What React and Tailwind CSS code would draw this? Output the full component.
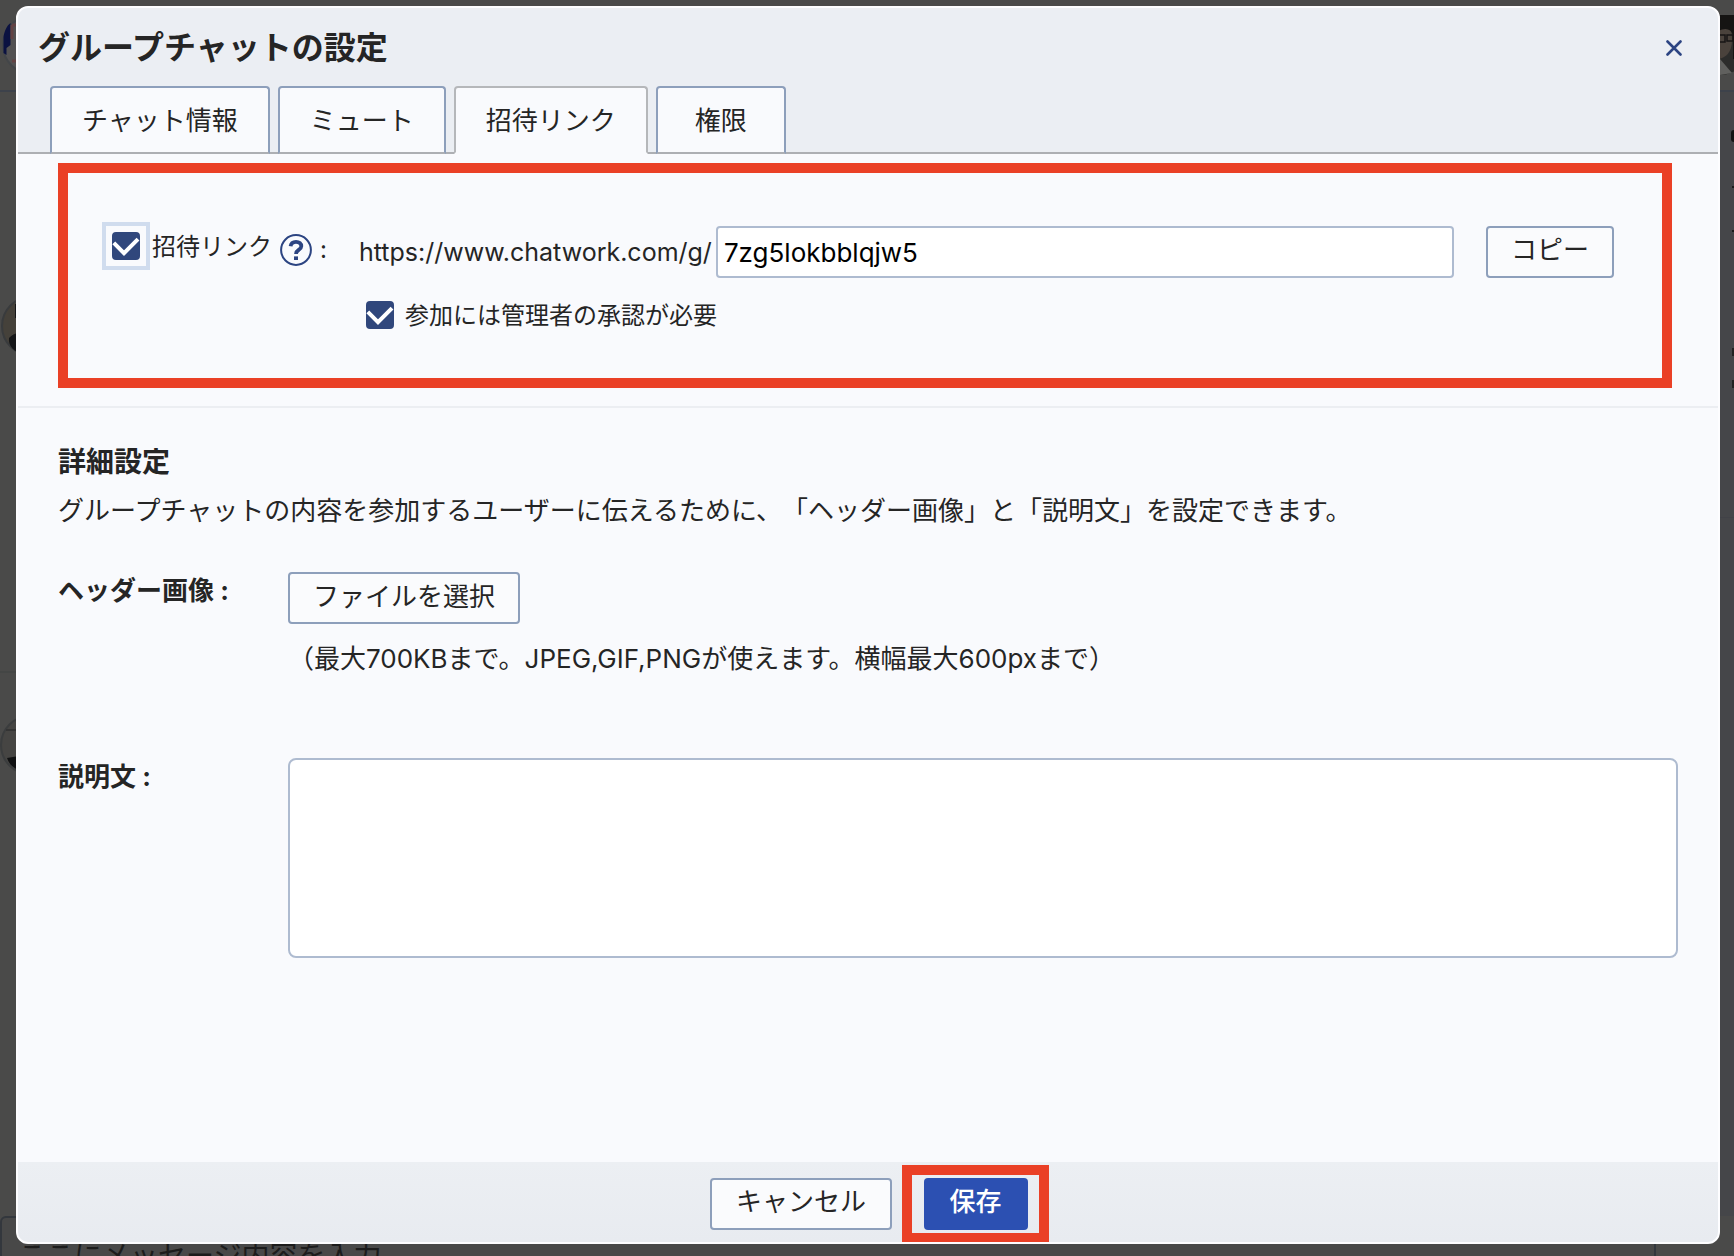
import React, { useState } from "react";

const TABS = ["チャット情報", "ミュート", "招待リンク", "権限"];

function Checkbox({ id, checked, onChange }) {
  return (
    <span className="relative inline-flex h-7 w-7 shrink-0">
      <input
        id={id}
        type="checkbox"
        checked={checked}
        onChange={onChange}
        className="h-7 w-7 appearance-none rounded-[4px] border-2 border-[#30477c] bg-white checked:bg-[#30477c]"
      />
      {checked && (
        <svg viewBox="0 0 28 28" className="pointer-events-none absolute inset-0 h-7 w-7" fill="none">
          <path d="M1.8 10.8 12 21.2 26 7.2" stroke="#fff" strokeWidth="4" />
        </svg>
      )}
    </span>
  );
}

function OutlineButton({ children, className = "px-[23px] pb-0.5" }) {
  return (
    <button
      type="button"
      className={`flex h-[52px] shrink-0 items-center justify-center rounded-[4px] border-2 border-[#8d9fbb] bg-[#fafbfd] text-[26px] leading-none whitespace-nowrap ${className}`}
    >
      {children}
    </button>
  );
}

function Backdrop() {
  return (
    <div aria-hidden="true" className="absolute inset-0 flex flex-col overflow-hidden bg-[#4a4a49]">
      <div className="flex h-[92px] shrink-0 items-center justify-between border-b-2 border-[#3d424b]">
        <svg viewBox="0 0 60 60" className="ml-0.5 h-[60px] w-[60px]">
          <circle cx="30" cy="30" r="29" fill="#535253" stroke="#434649" strokeWidth="2" />
          <path d="M1.5 22C2.5 16 4.5 11 8.5 8v22l-4 3v7l-3-2z" fill="#0b1241" />
          <path d="M10 10h7M10 10v14M10 46h7" stroke="#634344" strokeWidth="3" />
        </svg>
        <svg viewBox="0 0 60 60" className="-mr-4 h-[60px] w-[60px]">
          <circle cx="30" cy="30" r="30" fill="#2c2c2b" />
          <path d="M28 10c10-5 14 3 14 15s-6 18-14 19z" fill="#4a423c" />
          <path d="M28 0h32v44H43V20C41 14 36 12 28 16z" fill="#151413" />
          <path d="M30 20h5v7h-5M37 20h6v6h-6z" fill="none" stroke="#171515" strokeWidth="1.5" />
          <path d="M30 60V44l12 14z" fill="#60605e" />
        </svg>
      </div>
      <div className="flex min-h-0 flex-1 justify-between">
        <div className="w-[62px] pt-[204px]">
          <svg viewBox="0 0 60 60" className="ml-px h-[60px] w-[60px]">
            <circle cx="30" cy="30" r="29" fill="#45413a" stroke="#393b3d" strokeWidth="2" />
            <path d="M14 8h30v14H14zM8 42c4-4 8-6 14-4v20C13 56 7 50 8 42z" fill="#151618" />
          </svg>
          <div className="mt-[315px] h-0.5 bg-[#444645]" />
          <svg viewBox="0 0 60 60" className="mt-[42px] h-[60px] w-[60px]">
            <circle cx="30" cy="30" r="29" fill="#464543" stroke="#3b3d3e" strokeWidth="2" />
            <path d="M6 15h20" stroke="#343434" strokeWidth="2" />
            <path d="M7 43l12-2v14C13 53 9 49 7 43z" fill="#101112" />
          </svg>
        </div>
        <div className="w-[26px] bg-[#454649]">
          <div className="flex h-[426px] flex-col items-end border-b border-[#414247] pt-[38px]">
            <span className="h-3 w-[3px] rounded-l bg-[#141414]" />
            <span className="mt-11 h-0.5 w-0.5 bg-[#1b1b1b]" />
            <span className="mt-[42px] h-0.5 w-0.5 bg-[#1b1b1b]" />
            <span className="mt-[116px] h-2 w-0.5 bg-[#222]" />
            <span className="mt-6 h-2 w-0.5 bg-[#222]" />
          </div>
        </div>
      </div>
      <div className="flex h-10 shrink-0 overflow-hidden">
        <textarea
          tabIndex={-1}
          readOnly
          placeholder="ここにメッセージ内容を入力"
          className="mr-[78px] h-[120px] flex-1 resize-none rounded-[6px] border-2 border-[#33373d] bg-[#484848] px-4 pt-[18px] text-[28px] leading-10 placeholder:text-[#1c1c1c]"
        />
      </div>
    </div>
  );
}

export default function App() {
  const [tab, setTab] = useState(2);
  const [link, setLink] = useState(true);
  const [approve, setApprove] = useState(true);
  const [code, setCode] = useState("7zg5lokbblqjw5");

  return (
    <div className="relative flex min-h-screen flex-col pt-1.5 pr-3.5 pb-3 pl-4 font-['Inter','Noto_Sans_CJK_JP',sans-serif] text-[#252525] [text-spacing-trim:space-all]">
      <Backdrop />
      <section
        role="dialog"
        aria-labelledby="dialog-title"
        className="relative flex flex-1 flex-col overflow-hidden rounded-[12px] border-2 border-[#fdfdff] bg-[#f9fafd]"
      >
        <header className="bg-[#ebeef3]">
          <div className="flex h-[78px] items-center justify-between pt-0.5 pr-8 pl-5">
            <h1 id="dialog-title" className="text-[32px] leading-10 font-bold">
              グループチャットの設定
            </h1>
            <button type="button" aria-label="閉じる" className="flex h-6 w-6 items-center justify-center">
              <svg viewBox="0 0 16 16" className="h-4 w-4" fill="none">
                <path d="M1.5 1.5 14.5 14.5M14.5 1.5 1.5 14.5" stroke="#2c4482" strokeWidth="2.6" strokeLinecap="round" />
              </svg>
            </button>
          </div>
          <div role="tablist" className="flex">
            <div className="w-8 border-b-2 border-[#adafb3]" />
            {TABS.map((name, i) => (
              <React.Fragment key={name}>
                <button
                  type="button"
                  role="tab"
                  aria-selected={i === tab}
                  onClick={() => setTab(i)}
                  className={`h-[68px] min-w-[130px] rounded-t-[4px] border-2 bg-[#f9fafd] px-[30px] pt-0.5 text-[26px] leading-none whitespace-nowrap ${
                    i === tab
                      ? "border-[#b5b7ba] border-b-[#f9fafd]"
                      : "border-[#8d9fbb] border-b-[#adafb3]"
                  }`}
                >
                  {name}
                </button>
                {i < TABS.length - 1 && <div className="w-2 border-b-2 border-[#adafb3]" />}
              </React.Fragment>
            ))}
            <div className="flex-1 border-b-2 border-[#adafb3]" />
          </div>
        </header>

        <div className="flex-1">
          <div className="border-b-2 border-[#eceef2] pt-[9px] pr-[46px] pb-[18px] pl-10">
            <div className="flex h-[225px] border-10 border-[#ea4026] pt-[49px] pr-12 pl-[34px]">
              <div className="flex h-12 w-[257px] shrink-0 items-center">
                <span className="flex h-12 w-12 shrink-0 items-center justify-center border-4 border-[#d0dcee]">
                  <Checkbox id="link" checked={link} onChange={() => setLink(!link)} />
                </span>
                <label htmlFor="link" className="mt-0.5 ml-0.5 text-[24px] leading-8 whitespace-nowrap">
                  招待リンク
                </label>
                <button type="button" aria-label="ヘルプ" className="mt-2 ml-2 shrink-0">
                  <svg viewBox="0 0 32 32" className="h-8 w-8" fill="none">
                    <circle cx="16" cy="16" r="14.9" stroke="#2c4482" strokeWidth="2" />
                    <path
                      d="M10.6 12.2C11 9.2 13 7.8 16 7.8c3.2 0 5.3 1.7 5.3 4.4 0 3.7-5.2 3.6-5.2 7.3v.6"
                      stroke="#2c4482"
                      strokeWidth="3.8"
                    />
                    <path d="M14 22.4h4V26h-4z" fill="#2c4482" />
                  </svg>
                </button>
                <span className="mt-2 ml-2 text-[24px] leading-8">:</span>
              </div>
              <div className="min-w-0 flex-1 pt-1">
                <div className="flex items-center">
                  <label htmlFor="code" className="text-[25px] leading-8 whitespace-nowrap">
                    https://www.chatwork.com/g/
                  </label>
                  <input
                    id="code"
                    type="text"
                    value={code}
                    onChange={(e) => setCode(e.target.value)}
                    className="ml-1 h-[52px] min-w-0 flex-1 rounded-[4px] border-2 border-[#aebbd0] bg-white px-1.5 text-[26px] text-black"
                  />
                  <OutlineButton className="ml-8 px-[23px] pb-1">コピー</OutlineButton>
                </div>
                <div className="mt-5 ml-[7px] flex items-center">
                  <Checkbox id="approve" checked={approve} onChange={() => setApprove(!approve)} />
                  <label htmlFor="approve" className="mt-0.5 ml-[11px] text-[24px] leading-8">
                    参加には管理者の承認が必要
                  </label>
                </div>
              </div>
            </div>
          </div>

          <div className="pt-9 pr-10 pl-10">
            <h2 className="text-[28px] leading-9 font-bold">詳細設定</h2>
            <p className="mt-[13px] text-[26px] leading-9">
              グループチャットの内容を参加するユーザーに伝えるために、「ヘッダー画像」と「説明文」を設定できます。
            </p>

            <div className="mt-[43px] flex">
              <div className="w-[230px] shrink-0 pt-px text-[26px] leading-9 font-bold">ヘッダー画像 :</div>
              <div>
                <OutlineButton>ファイルを選択</OutlineButton>
                <p className="mt-[17px] text-[26px] leading-9">
                  （最大700KBまで。JPEG,GIF,PNGが使えます。横幅最大600pxまで）
                </p>
              </div>
            </div>

            <div className="mt-[81px] flex">
              <label htmlFor="desc" className="w-[230px] shrink-0 pt-px text-[26px] leading-9 font-bold">
                説明文 :
              </label>
              <textarea
                id="desc"
                className="h-[200px] flex-1 resize-none rounded-[8px] border-2 border-[#aebbd0] bg-white p-3 text-[26px]"
              />
            </div>
          </div>
        </div>

        <footer className="flex h-20 shrink-0 items-center justify-center bg-gradient-to-b from-[#eceff3] to-[#e8ebf0] pt-1 pl-[23px]">
          <OutlineButton className="px-6 pb-1">キャンセル</OutlineButton>
          <div className="ml-2.5 flex h-[78px] w-[147px] items-center justify-center border-10 border-[#ea4026]">
            <button
              type="button"
              className="h-[52px] w-[104px] rounded-[4px] bg-[#2c50b2] pb-1 text-[26px] leading-none font-medium text-white"
            >
              保存
            </button>
          </div>
        </footer>
      </section>
    </div>
  );
}
